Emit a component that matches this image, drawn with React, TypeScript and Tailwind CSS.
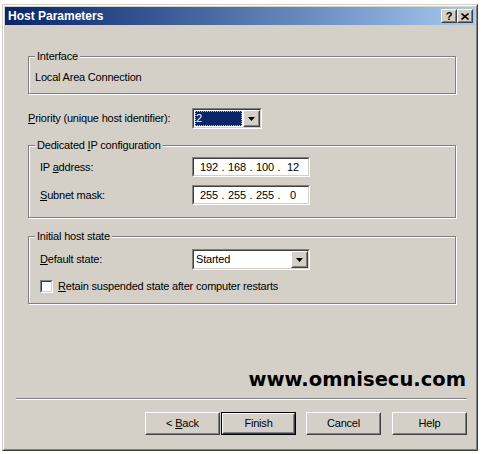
import type { ReactNode } from 'react';

const font = "font-['Liberation_Sans',Arial,sans-serif]";

function Sunken({ className, children }: { className?: string; children?: ReactNode }) {
  return (
    <div className={`border border-t-[#808080] border-l-[#808080] border-r-white border-b-white ${className ?? ''}`}>
      <div className="flex h-full w-full border border-t-[#404040] border-l-[#404040] border-r-[#d4d0c8] border-b-[#d4d0c8] bg-white">
        {children}
      </div>
    </div>
  );
}

function Raised({ className, children }: { className?: string; children?: ReactNode }) {
  return (
    <div className={`border border-t-white border-l-white border-r-[#404040] border-b-[#404040] bg-[#d4d0c8] ${className ?? ''}`}>
      <div className="flex h-full w-full items-center justify-center border border-t-[#d4d0c8] border-l-[#d4d0c8] border-r-[#808080] border-b-[#808080]">
        {children}
      </div>
    </div>
  );
}

function Arrow() {
  return (
    <Raised className="h-full w-[17px] shrink-0">
      <svg width="7" height="4" viewBox="0 0 7 4" className="mt-[1px]">
        <path d="M0 0h7L3.5 4z" fill="#000" />
      </svg>
    </Raised>
  );
}

function Group({ label, className, children }: { label: ReactNode; className?: string; children?: ReactNode }) {
  return (
    <div className={`relative ml-[23px] w-[428px] border border-[#808080] shadow-[1px_1px_0_white,inset_1px_1px_0_white] ${className ?? ''}`}>
      <span className="absolute left-[6px] top-[-7px] bg-[#d4d0c8] px-[2px] text-[11px] leading-[13px]">{label}</span>
      {children}
    </div>
  );
}

function IpField({ parts }: { parts: string[] }) {
  return (
    <Sunken className="h-[20px] w-[118px]">
      <div className="flex items-center pl-[4px] text-[11px] leading-[16px]">
        {parts.map((p, i) => (
          <span key={i} className="flex">
            <span className="w-[22px] text-center">{p}</span>
            {i < 3 && <span className="w-[6px] text-center">.</span>}
          </span>
        ))}
      </div>
    </Sunken>
  );
}

function Button({ label, isDefault }: { label: ReactNode; isDefault?: boolean }) {
  const btn = (
    <Raised className={isDefault ? 'h-full w-full' : 'h-[23px] w-[75px]'}>
      <span className="text-[11px] leading-[13px]">{label}</span>
    </Raised>
  );
  if (!isDefault) return btn;
  return <div className="h-[23px] w-[75px] border border-black">{btn}</div>;
}

export default function App() {
  return (
    <div className={`h-[454px] w-[485px] overflow-hidden bg-white pt-[4px] pl-[2px] text-black ${font}`}>
      <div className="h-[447px] w-[476px] border border-t-[#d4d0c8] border-l-[#d4d0c8] border-r-[#404040] border-b-[#404040] bg-[#d4d0c8]">
        <div className="h-full w-full border border-t-white border-l-white border-r-[#808080] border-b-[#808080] p-[1px]">
          {/* title bar */}
          <div className="flex h-[18px] items-center bg-gradient-to-r from-[#0a246a] to-[#a6caf0] pl-[3px] pr-[2px]">
            <span className="flex-1 text-[12px] font-bold leading-[14px] text-white">Host Parameters</span>
            <Raised className="h-[14px] w-[16px]">
              <span className="text-[11px] font-bold leading-[11px]">?</span>
            </Raised>
            <Raised className="h-[14px] w-[16px]">
              <svg width="8" height="7" viewBox="0 0 8 7">
                <path d="M0.5 0.5l7 6M7.5 0.5l-7 6" stroke="#000" strokeWidth="1.6" />
              </svg>
            </Raised>
          </div>

          <div className="text-[11px] leading-[13px] tracking-[-0.2px]">
            <Group label="Interface" className="mt-[31px] h-[38px]">
              <div className="pl-[6px] pt-[14px]">Local Area Connection</div>
            </Group>

            <div className="ml-[23px] mt-[14px] flex h-[21px] items-center">
              <span className="w-[164px]"><u>P</u>riority (unique host identifier):</span>
              <Sunken className="h-[21px] w-[70px]">
                <div className="flex-1 p-[1px]">
                  <div className="h-full bg-[#0a246a] pl-[1px] leading-[15px] text-white outline-1 outline-dotted outline-[#c0c0c0] -outline-offset-1">2</div>
                </div>
                <Arrow />
              </Sunken>
            </div>

            <Group label={<>Dedicated <u>I</u>P configuration</>} className="mt-[16px] h-[73px]">
              <div className="pl-[11px] pt-[11px]">
                <div className="flex h-[20px] items-center">
                  <span className="w-[152px]">IP <u>a</u>ddress:</span>
                  <IpField parts={['192', '168', '100', '12']} />
                </div>
                <div className="mt-[8px] flex h-[20px] items-center">
                  <span className="w-[152px]"><u>S</u>ubnet mask:</span>
                  <IpField parts={['255', '255', '255', '0']} />
                </div>
              </div>
            </Group>

            <Group label="Initial host state" className="mt-[18px] h-[68px]">
              <div className="pl-[11px] pt-[12px]">
                <div className="flex h-[21px] items-center">
                  <span className="w-[152px]"><u>D</u>efault state:</span>
                  <Sunken className="h-[21px] w-[118px]">
                    <div className="flex-1 pl-[2px] pt-[2px]">Started</div>
                    <Arrow />
                  </Sunken>
                </div>
                <div className="mt-[10px] flex items-center">
                  <Sunken className="h-[13px] w-[13px]" />
                  <span className="ml-[5px]"><u>R</u>etain suspended state after computer restarts</span>
                </div>
              </div>
            </Group>

            <div className="mt-[65px] pr-[9px] text-right font-['DejaVu_Sans',sans-serif] text-[19.5px] font-bold leading-[22px] tracking-normal">
              www.omnisecu.com
            </div>

            <div className="ml-[11px] mt-[7px] h-[2px] w-[451px] border-t border-b border-t-[#808080] border-b-white" />

            <div className="ml-[140px] mt-[12px] flex">
              <Button label={<>&lt; <u>B</u>ack</>} />
              <div className="ml-[1px]"><Button label="Finish" isDefault /></div>
              <div className="ml-[10px]"><Button label="Cancel" /></div>
              <div className="ml-[11px]"><Button label="Help" /></div>
            </div>
          </div>
        </div>
      </div>
    </div>
  );
}
